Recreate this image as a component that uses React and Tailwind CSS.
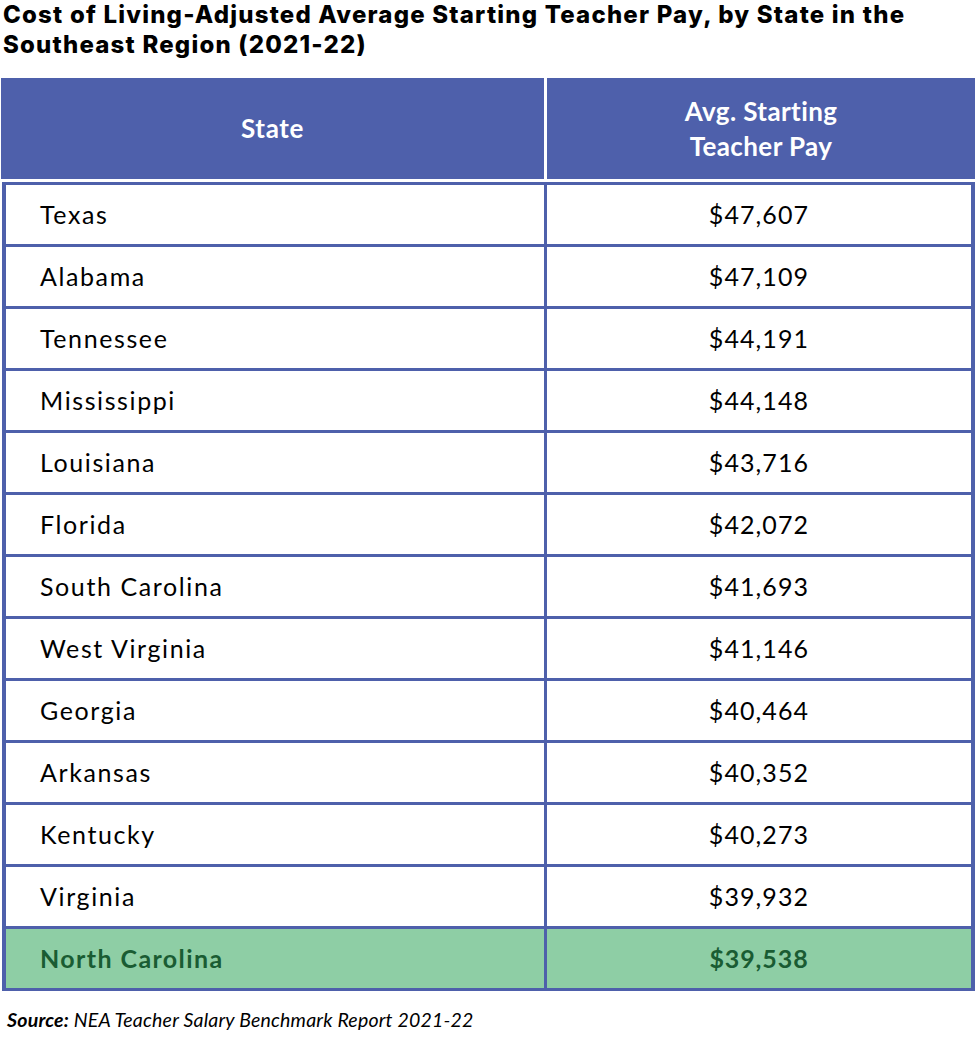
import React from "react";

const rows = [
  ["Texas", "$47,607"],
  ["Alabama", "$47,109"],
  ["Tennessee", "$44,191"],
  ["Mississippi", "$44,148"],
  ["Louisiana", "$43,716"],
  ["Florida", "$42,072"],
  ["South Carolina", "$41,693"],
  ["West Virginia", "$41,146"],
  ["Georgia", "$40,464"],
  ["Arkansas", "$40,352"],
  ["Kentucky", "$40,273"],
  ["Virginia", "$39,932"],
];

export default function App() {
  return (
    <div className="w-[976px] h-[1037px] bg-white" style={{ fontFamily: "Lato, 'Open Sans', sans-serif" }}>
      <h1
        className="pl-[3px] pt-0 text-[24px] leading-[30px] font-extrabold text-black tracking-[1.2px] h-[78px] whitespace-nowrap"
        style={{ fontFamily: "Inter, 'Open Sans', sans-serif" }}
      >
        Cost of Living-Adjusted Average Starting Teacher Pay, by State in the
        <br />
        Southeast Region (2021-22)
      </h1>
      <div className="flex gap-[3px] pl-[1px] w-[975px] h-[101px]">
        <div className="w-[543px] bg-[#4e60ab] flex items-center justify-center text-white font-bold text-[26px] tracking-[0.6px]">
          State
        </div>
        <div className="flex-1 bg-[#4e60ab] flex items-center justify-center text-center text-white font-bold text-[26px] tracking-[0.4px] leading-[35px]">
          Avg. Starting
          <br />
          Teacher Pay
        </div>
      </div>
      <div className="mt-[3px] ml-[2px] w-[973px] bg-[#4e60ab] pt-[3px] pb-[3px] px-[4px] grid grid-cols-[538px_424px] gap-x-[3px] gap-y-[3px] auto-rows-[59px]">
        {rows.map(([s, v]) => (
          <React.Fragment key={s}>
            <div className="bg-white flex items-center pl-[34px] pt-[1px] text-[25px] tracking-[1.6px] text-black">{s}</div>
            <div className="bg-white flex items-center justify-center pt-[1px] text-[25px] tracking-[1.1px] text-black">{v}</div>
          </React.Fragment>
        ))}
        <div className="bg-[#8ecea5] flex items-center pl-[34px] pt-[1px] text-[25px] tracking-[1.4px] font-bold text-[#1a5c33]">North Carolina</div>
        <div className="bg-[#8ecea5] flex items-center justify-center pt-[1px] text-[25px] tracking-[0.9px] font-bold text-[#1a5c33]">$39,538</div>
      </div>
      <div className="mt-[14px] pl-[7px] text-[19.5px] italic text-black tracking-[0.2px]">
        <span className="font-bold">Source:</span> NEA Teacher Salary Benchmark Report 2021-22
      </div>
    </div>
  );
}
